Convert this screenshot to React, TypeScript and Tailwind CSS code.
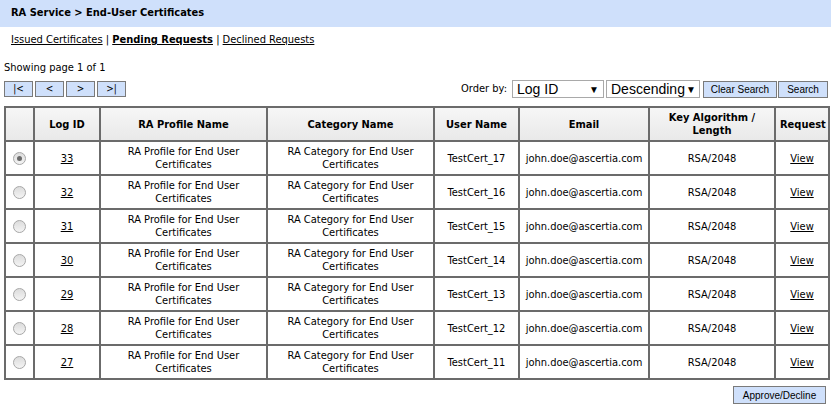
import React from "react";

const rows = [
  { id: 33, user: "TestCert_17" },
  { id: 32, user: "TestCert_16" },
  { id: 31, user: "TestCert_15" },
  { id: 30, user: "TestCert_14" },
  { id: 29, user: "TestCert_13" },
  { id: 28, user: "TestCert_12" },
  { id: 27, user: "TestCert_11" },
];

const font = "font-['DejaVu_Sans_Condensed','Liberation_Sans',sans-serif]";

function Radio({ checked }: { checked?: boolean }) {
  return (
    <span className="mx-auto flex h-[13px] w-[13px] items-center justify-center rounded-full border border-[#a8a8a8] bg-gradient-to-b from-[#dcdcdc] to-[#f4f4f4]">
      {checked && <span className="h-[5px] w-[5px] rounded-full bg-[#6a6a6a]" />}
    </span>
  );
}

function PagerButton({ label }: { label: string }) {
  return (
    <button className="h-[16px] w-[29px] border border-[#7a7a7a] bg-[#cfe0fb] text-[10px] leading-none text-black">
      {label}
    </button>
  );
}

export default function App() {
  const th = "border-2 border-[#6b6b6b] bg-gradient-to-b from-[#f6f6f6] to-[#e9e9e9] px-1 text-center font-bold leading-[13px]";
  const td = "border-2 border-[#6b6b6b] px-1 text-center leading-[13px]";

  return (
    <div className={`h-[408px] w-[831px] bg-white text-[11px] text-black ${font}`}>
      <div className="flex h-[27px] items-center bg-[#cfe0fb] pl-[11px] font-bold">
        RA Service &gt; End-User Certificates
      </div>

      <div className="mt-[6px] pl-[11px] leading-[14px]">
        <a className="underline">Issued Certificates</a>
        <span> | </span>
        <a className="font-bold underline">Pending Requests</a>
        <span> | </span>
        <a className="underline">Declined Requests</a>
      </div>

      <div className="mt-[14px] pl-[4px] leading-[13px]">Showing page 1 of 1</div>

      <div className="mt-[6px] flex h-[18px] items-center justify-between pl-[4px] pr-[3px]">
        <div className="flex gap-[2px]">
          <PagerButton label="|<" />
          <PagerButton label="<" />
          <PagerButton label=">" />
          <PagerButton label=">|" />
        </div>
        <div className="flex items-center gap-[2px]">
          <span className="mr-[3px]">Order by:</span>
          <div className="flex h-[18px] w-[92px] items-center justify-between border border-[#a9a9a9] px-[4px] font-['Liberation_Sans',sans-serif] text-[14px]">
            <span>Log ID</span>
            <span className="text-[10px]">▼</span>
          </div>
          <div className="flex h-[18px] w-[94px] items-center justify-between border border-[#a9a9a9] pl-[4px] pr-[3px] font-['Liberation_Sans',sans-serif] text-[14px]">
            <span>Descending</span>
            <span className="text-[10px]">▼</span>
          </div>
          <button className="ml-[1px] h-[17px] w-[74px] border border-[#7a7a7a] bg-[#cfe0fb] font-['Liberation_Sans',sans-serif] text-[10px]">
            Clear Search
          </button>
          <button className="ml-[-1px] h-[17px] w-[50px] border border-[#7a7a7a] bg-[#cfe0fb] font-['Liberation_Sans',sans-serif] text-[10px]">
            Search
          </button>
        </div>
      </div>

      <table className="ml-[4px] mt-[8px] w-[824px] table-fixed border-collapse border-2 border-[#6b6b6b]">
        <colgroup>
          <col className="w-[29px]" />
          <col className="w-[66px]" />
          <col className="w-[167px]" />
          <col className="w-[167px]" />
          <col className="w-[85px]" />
          <col className="w-[130px]" />
          <col className="w-[126px]" />
          <col className="w-[54px]" />
        </colgroup>
        <thead>
          <tr className="h-[34px]">
            <th className={th}></th>
            <th className={th}>Log ID</th>
            <th className={th}>RA Profile Name</th>
            <th className={th}>Category Name</th>
            <th className={th}>User Name</th>
            <th className={th}>Email</th>
            <th className={th}>Key Algorithm / Length</th>
            <th className={`${th} px-0`}>Request</th>
          </tr>
        </thead>
        <tbody>
          {rows.map((r, i) => (
            <tr key={r.id} className="h-[34px]">
              <td className={td}>
                <Radio checked={i === 0} />
              </td>
              <td className={td}>
                <a className="underline">{r.id}</a>
              </td>
              <td className={td}>RA Profile for End User Certificates</td>
              <td className={td}>RA Category for End User Certificates</td>
              <td className={td}>{r.user}</td>
              <td className={td}>john.doe@ascertia.com</td>
              <td className={td}>RSA/2048</td>
              <td className={td}>
                <a className="underline">View</a>
              </td>
            </tr>
          ))}
        </tbody>
      </table>

      <div className="mt-[6px] flex justify-end pr-[5px]">
        <button className="h-[18px] w-[93px] border border-[#7a7a7a] bg-[#cfe0fb] font-['Liberation_Sans',sans-serif] text-[10px]">
          Approve/Decline
        </button>
      </div>
    </div>
  );
}
